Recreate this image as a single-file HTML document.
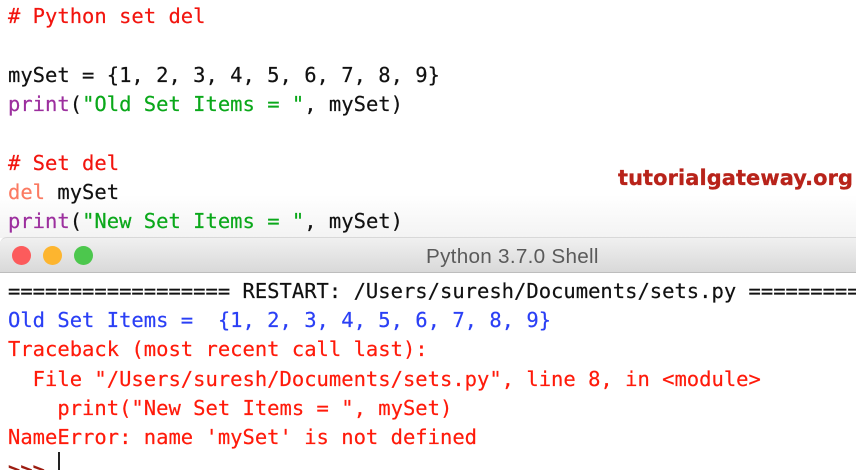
<!DOCTYPE html>
<html>
<head>
<meta charset="utf-8">
<style>
html,body{margin:0;padding:0;background:#fff}
#p{position:relative;width:856px;height:470px;overflow:hidden;background:#fff}
.l{position:absolute;left:8px;white-space:pre;font-family:"DejaVu Sans Mono","Liberation Mono",monospace;font-size:20.5px;line-height:24px;height:24px;color:#111;-webkit-text-stroke:.2px currentColor;filter:blur(.3px)}
.r{color:#f2140e}.g{color:#0aa81a}.p{color:#9c2f9e}.o{color:#fb7a62}.b{color:#2a3ff5}.e{color:#ff1a0a}
#fade{position:absolute;left:0;top:195px;width:856px;height:43px;background:linear-gradient(#fff,#f3f3f3)}
#tb{position:absolute;left:0;top:237px;width:856px;height:34px;border-top:1px solid #d8d8d8;border-bottom:1px solid #bdbdbd;border-top-left-radius:7px;background:linear-gradient(#f0f0f0,#d9d9d9);box-sizing:content-box}
.d{position:absolute;top:246px;width:19px;height:19px;border-radius:50%}
#t{position:absolute;left:426px;top:244px;font-family:"Liberation Sans",sans-serif;font-size:20.7px;line-height:26px;color:#5a5a5a;white-space:pre;letter-spacing:.27px;filter:blur(.3px)}
#logo{position:absolute;left:618px;top:164px;font-family:"DejaVu Sans",sans-serif;font-weight:bold;font-size:20.9px;line-height:28px;color:#b8231a;white-space:pre;letter-spacing:.1px;-webkit-text-stroke:.3px #b8231a;filter:blur(.3px)}
#cur{position:absolute;left:58px;top:452px;width:1.5px;height:18px;background:#222}
</style>
</head>
<body>
<div id="p">
<div id="fade"></div>
<div class="l r" style="top:4px"># Python set del</div>
<div class="l" style="top:63px">mySet = {1, 2, 3, 4, 5, 6, 7, 8, 9}</div>
<div class="l" style="top:92px"><span class="p">print</span>(<span class="g">"Old Set Items = "</span>, mySet)</div>
<div class="l r" style="top:151px"># Set del</div>
<div class="l" style="top:180px"><span class="o">del</span> mySet</div>
<div class="l" style="top:209px"><span class="p">print</span>(<span class="g">"New Set Items = "</span>, mySet)</div>
<div id="logo">tutorialgateway.org</div>
<div id="tb"></div>
<div class="d" style="left:12px;background:#fc5b5c"></div>
<div class="d" style="left:43px;background:#fdb52f"></div>
<div class="d" style="left:74px;background:#4cc74d"></div>
<div id="t">Python 3.7.0 Shell</div>
<div class="l" style="top:279px">================== RESTART: /Users/suresh/Documents/sets.py ===========</div>
<div class="l b" style="top:308px">Old Set Items =  {1, 2, 3, 4, 5, 6, 7, 8, 9}</div>
<div class="l e" style="top:337px">Traceback (most recent call last):</div>
<div class="l e" style="top:367px">  File "/Users/suresh/Documents/sets.py", line 8, in &lt;module&gt;</div>
<div class="l e" style="top:396px">    print("New Set Items = ", mySet)</div>
<div class="l e" style="top:425px">NameError: name 'mySet' is not defined</div>
<div class="l" style="top:458px;color:#9c1c10;font-weight:bold">&gt;&gt;&gt;</div>
<div id="cur"></div>
</div>
</body>
</html>
